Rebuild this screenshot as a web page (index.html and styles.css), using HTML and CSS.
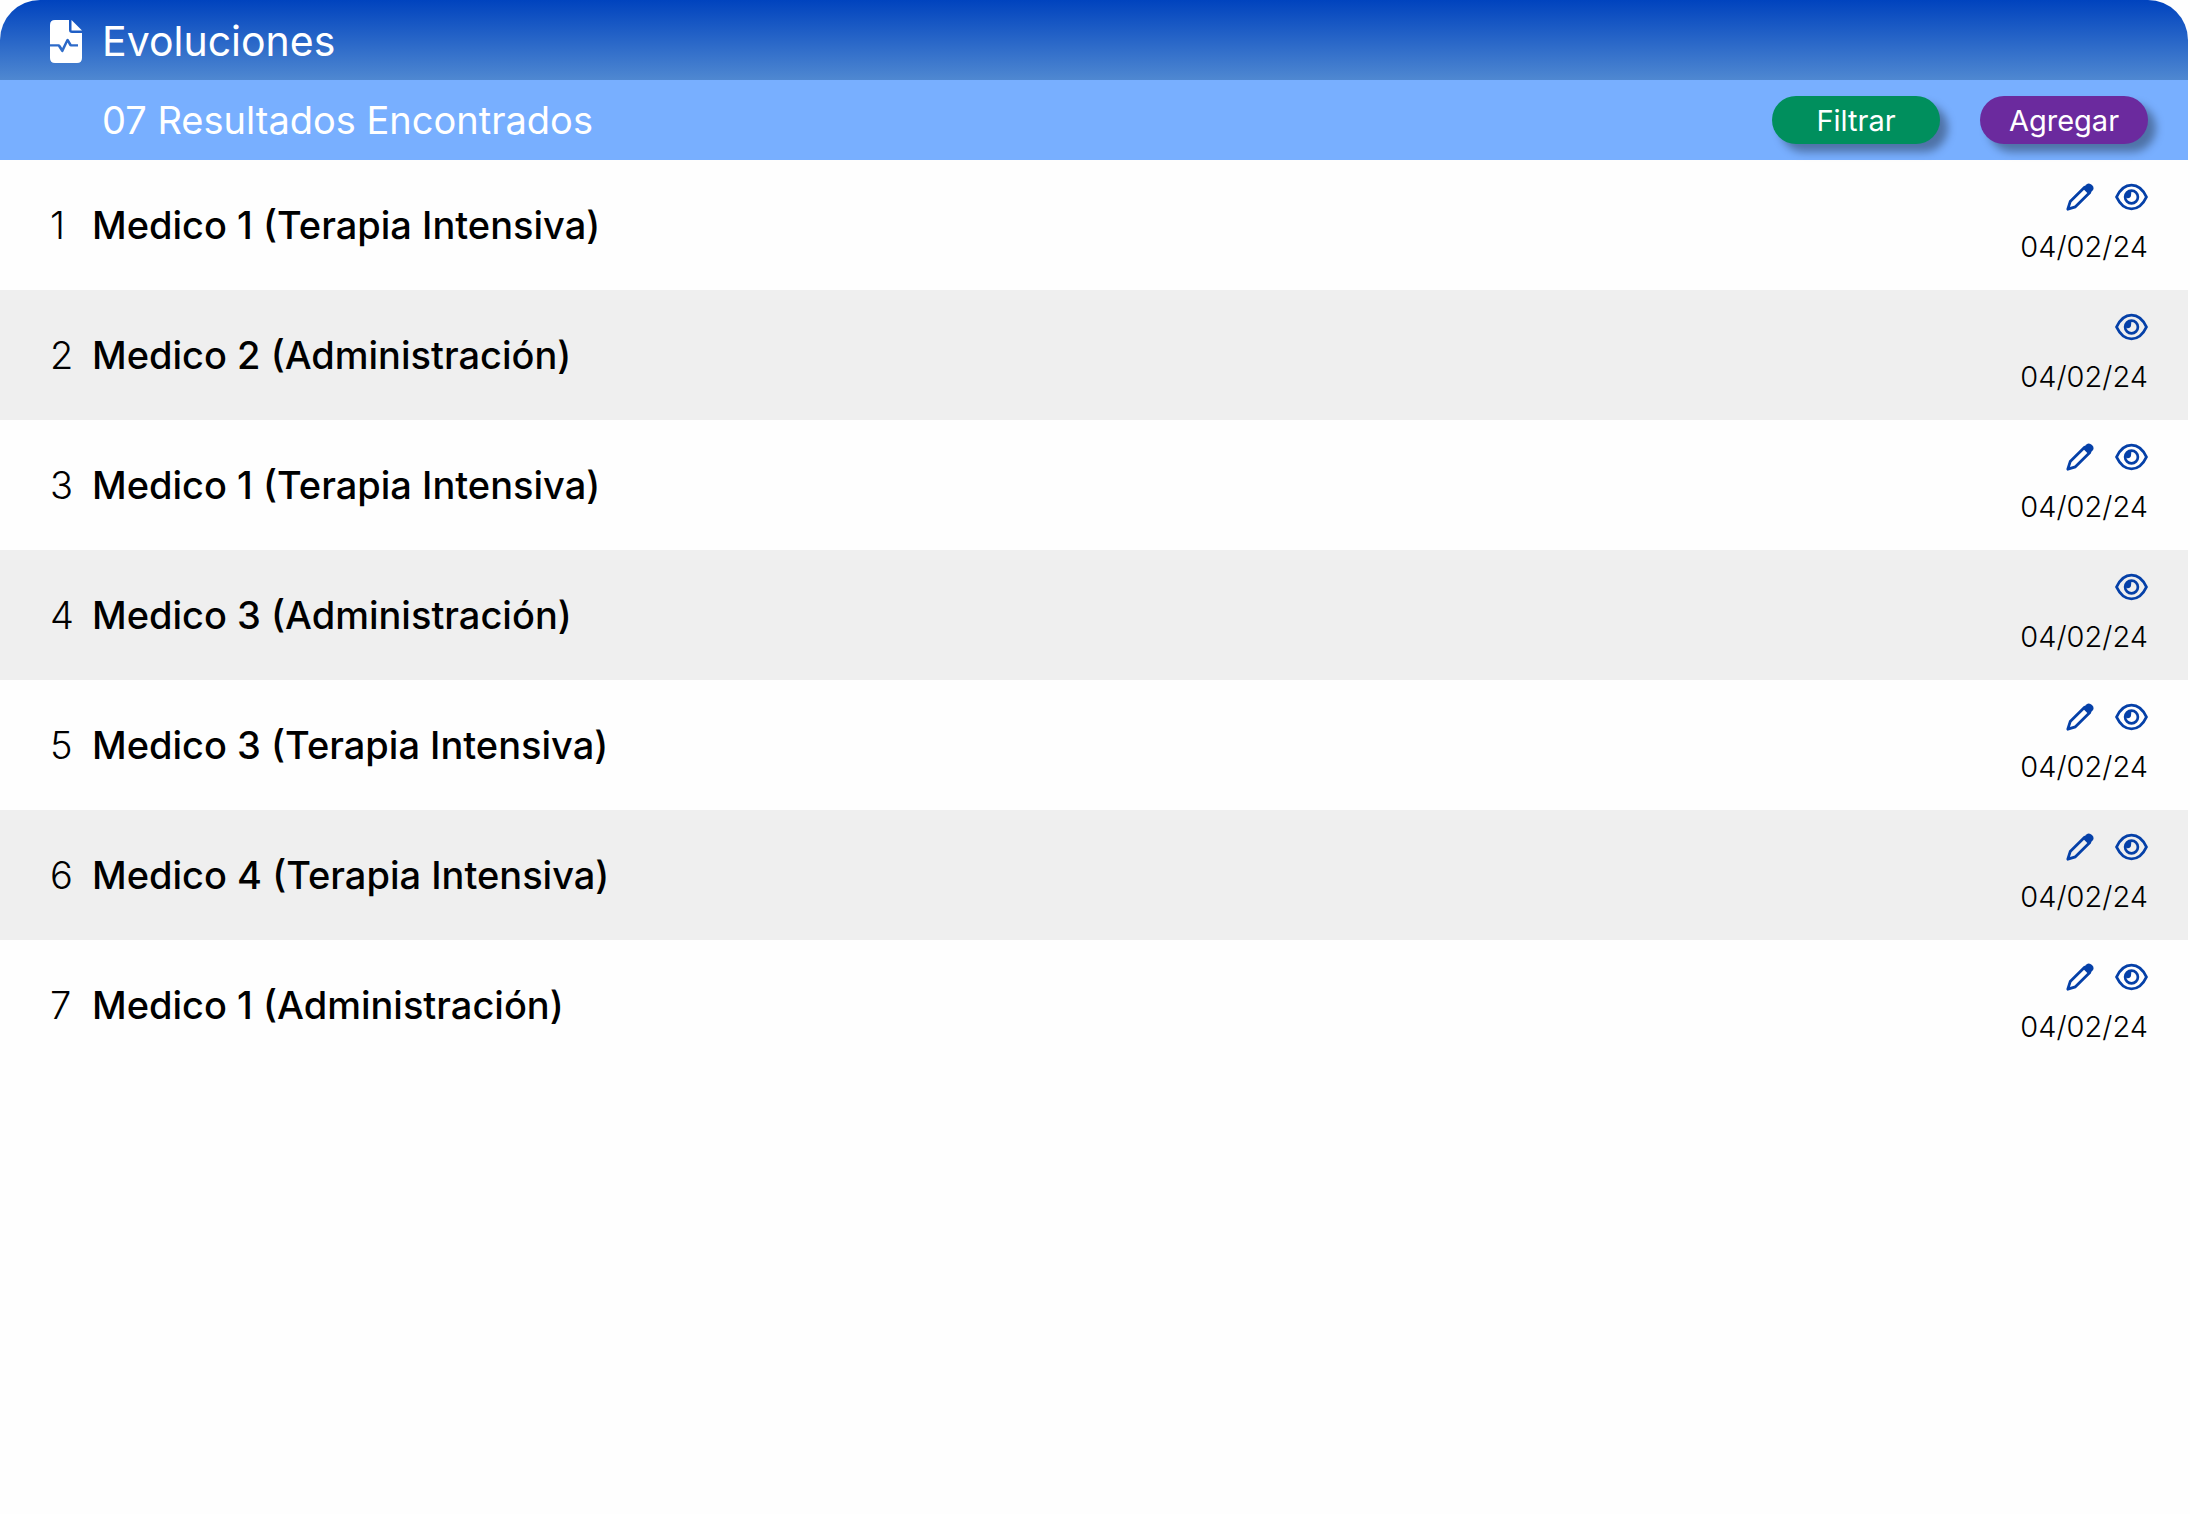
FILE: index.html
```html
<!DOCTYPE html>
<html lang="es">

<head>
    <meta charset="UTF-8">
    <title>Evoluciones</title>
    <link rel="stylesheet" href="styles.css">
</head>

<body>
    <!-- iconos compartidos -->
    <svg class="sprite" aria-hidden="true">
        <symbol id="pencil" viewBox="0 0 28 28">
            <path d="M1.8 26.2 L4.2 18.6 L18.6 4.2 L23.8 9.4 L9.4 23.8 Z" fill="none" stroke="currentColor" stroke-width="2.8" stroke-linejoin="round"/>
            <path d="M16.6 5.2 L20.4 1.4 Q23.2 -0.8 26 2 Q28.8 4.8 26.6 7.6 L22.8 11.4 Z" fill="currentColor"/>
        </symbol>
        <symbol id="eye" viewBox="0 0 32 26">
            <path d="M1.5 13 C5 5.5 10 1.5 16 1.5 S27 5.5 30.5 13 C27 20.5 22 24.5 16 24.5 S5 20.5 1.5 13 Z" fill="none" stroke="currentColor" stroke-width="2.8" stroke-linejoin="round"/>
            <circle cx="16" cy="13" r="6.2" fill="none" stroke="currentColor" stroke-width="2.6"/>
            <path d="M16 6.6 A6.4 6.4 0 0 0 9.6 13 L12 14.2 Q15.6 14.4 15.6 10.6 Z" fill="currentColor"/>
        </symbol>
    </svg>

    <main class="panel">
        <header class="title_box">
            <svg class="title_icon" viewBox="0 0 32 43" aria-hidden="true">
                <path d="M5 0 H19 V10 Q19 13 22 13 H32 V38 Q32 43 27 43 H5 Q0 43 0 38 V26.5 H8 L11.2 31.6 Q12.4 33 13.4 31.4 L17.6 22.6 L19.2 25.6 Q19.8 26.5 21 26.5 H28 V24.3 H21.6 L18.6 19.2 Q17.4 18 16.4 19.6 L12.2 28 L10.4 25.2 Q9.8 24.3 8.6 24.3 H0 V5 Q0 0 5 0 Z" fill="#fff"/>
                <path d="M21.5 0 L32 10.5 H21.5 Z" fill="#fff"/>
            </svg>
            <h1 class="title">Evoluciones</h1>
        </header>
        <div class="result_box">
            <p class="result_text">07 Resultados Encontrados</p>
            <button type="button" class="btn btn_filter">Filtrar</button>
            <button type="button" class="btn btn_add">Agregar</button>
        </div>
        <ul class="log">
            <li class="log_box">
                <span class="log_num">1</span>
                <p class="log_text">Medico 1 (Terapia Intensiva)</p>
                <div class="log_side">
                    <div class="actions">
                        <button type="button" class="icon_btn" aria-label="Editar"><svg class="pencil"><use href="#pencil"/></svg></button>
                        <button type="button" class="icon_btn" aria-label="Ver"><svg class="eye"><use href="#eye"/></svg></button>
                    </div>
                    <time class="date" datetime="2024-02-04">04/02/24</time>
                </div>
            </li>
            <li class="log_box">
                <span class="log_num">2</span>
                <p class="log_text">Medico 2 (Administración)</p>
                <div class="log_side">
                    <div class="actions">
                        <button type="button" class="icon_btn" aria-label="Ver"><svg class="eye"><use href="#eye"/></svg></button>
                    </div>
                    <time class="date" datetime="2024-02-04">04/02/24</time>
                </div>
            </li>
            <li class="log_box">
                <span class="log_num">3</span>
                <p class="log_text">Medico 1 (Terapia Intensiva)</p>
                <div class="log_side">
                    <div class="actions">
                        <button type="button" class="icon_btn" aria-label="Editar"><svg class="pencil"><use href="#pencil"/></svg></button>
                        <button type="button" class="icon_btn" aria-label="Ver"><svg class="eye"><use href="#eye"/></svg></button>
                    </div>
                    <time class="date" datetime="2024-02-04">04/02/24</time>
                </div>
            </li>
            <li class="log_box">
                <span class="log_num">4</span>
                <p class="log_text">Medico 3 (Administración)</p>
                <div class="log_side">
                    <div class="actions">
                        <button type="button" class="icon_btn" aria-label="Ver"><svg class="eye"><use href="#eye"/></svg></button>
                    </div>
                    <time class="date" datetime="2024-02-04">04/02/24</time>
                </div>
            </li>
            <li class="log_box">
                <span class="log_num">5</span>
                <p class="log_text">Medico 3 (Terapia Intensiva)</p>
                <div class="log_side">
                    <div class="actions">
                        <button type="button" class="icon_btn" aria-label="Editar"><svg class="pencil"><use href="#pencil"/></svg></button>
                        <button type="button" class="icon_btn" aria-label="Ver"><svg class="eye"><use href="#eye"/></svg></button>
                    </div>
                    <time class="date" datetime="2024-02-04">04/02/24</time>
                </div>
            </li>
            <li class="log_box">
                <span class="log_num">6</span>
                <p class="log_text">Medico 4 (Terapia Intensiva)</p>
                <div class="log_side">
                    <div class="actions">
                        <button type="button" class="icon_btn" aria-label="Editar"><svg class="pencil"><use href="#pencil"/></svg></button>
                        <button type="button" class="icon_btn" aria-label="Ver"><svg class="eye"><use href="#eye"/></svg></button>
                    </div>
                    <time class="date" datetime="2024-02-04">04/02/24</time>
                </div>
            </li>
            <li class="log_box">
                <span class="log_num">7</span>
                <p class="log_text">Medico 1 (Administración)</p>
                <div class="log_side">
                    <div class="actions">
                        <button type="button" class="icon_btn" aria-label="Editar"><svg class="pencil"><use href="#pencil"/></svg></button>
                        <button type="button" class="icon_btn" aria-label="Ver"><svg class="eye"><use href="#eye"/></svg></button>
                    </div>
                    <time class="date" datetime="2024-02-04">04/02/24</time>
                </div>
            </li>
        </ul>
    </main>
</body>

</html>
```
FILE: styles.css
```css
* {
    box-sizing: border-box;
}

body {
    margin: 0;
    background-color: #fefefe;
    font-family: Inter, "Open Sans", sans-serif;
    color: black;
}

h1,
p,
ul {
    margin: 0;
    padding: 0;
}

button {
    border: none;
    padding: 0;
    font-family: inherit;
    cursor: pointer;
}

.sprite {
    display: none;
}

.panel {
    margin-right: 2px;
    border-radius: 40px 40px 0 0;
    overflow: hidden;
}

.title_box {
    display: flex;
    align-items: center;
    gap: 20px;
    height: 80px;
    padding: 2px 40px 0 50px;
    background: linear-gradient(#0043be, #4f88d1);
}

.title_icon {
    width: 32px;
    height: 43px;
}

.title {
    color: white;
    font-size: 41px;
    font-weight: 400;
    line-height: 48px;
}

.result_box {
    display: flex;
    align-items: center;
    gap: 40px;
    height: 80px;
    padding: 0 40px 0 102px;
    background-color: #78afff;
}

.result_text {
    flex: 1;
    color: white;
    font-size: 38px;
}

.btn {
    width: 168px;
    height: 48px;
    border-radius: 24px;
    color: white;
    font-size: 29px;
    box-shadow: 8px 8px 8px rgba(0, 0, 0, 0.35);
}

.btn_filter {
    background-color: #008f5d;
}

.btn_add {
    background-color: #6b2a9e;
}

.log {
    list-style: none;
}

.log_box {
    display: flex;
    align-items: center;
    height: 130px;
    padding: 0 40px 0 50px;
}

.log_box:nth-child(even) {
    background-color: #efefef;
}

.log_num {
    width: 42px;
    font-size: 38px;
    font-weight: 300;
}

.log_text {
    flex: 1;
    font-size: 38px;
    font-weight: 500;
}

.log_side {
    display: flex;
    flex-direction: column;
    align-items: flex-end;
    gap: 16px;
}

.actions {
    display: flex;
    gap: 21px;
}

.icon_btn {
    display: flex;
    align-items: center;
    background: none;
    color: #0540a8;
}

.pencil {
    width: 28px;
    height: 28px;
}

.eye {
    width: 33px;
    height: 28px;
}

.date {
    font-size: 29px;
    font-weight: 300;
    line-height: 40px;
}
```
